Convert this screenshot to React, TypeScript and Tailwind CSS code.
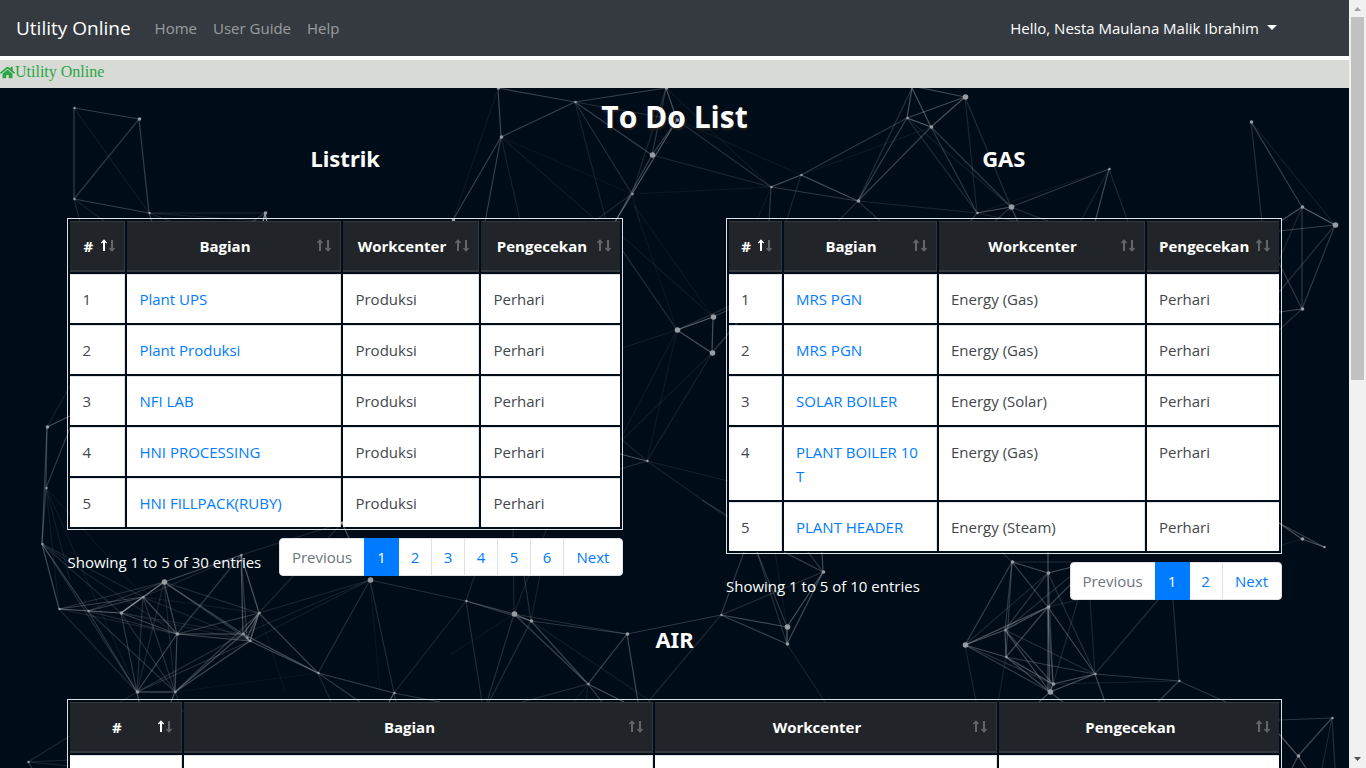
import { FaHome } from "react-icons/fa";

type Segment = [number, number, number, number, number];
type Dot = [number, number, number];

const segments: Segment[] = [
  [74, 108, 139, 119, 0.3], [74, 108, 74, 199, 0.3], [139, 119, 74, 199, 0.25], [139, 119, 149, 213, 0.3],
  [74, 108, 149, 213, 0.1], [74, 199, 149, 213, 0.3], [74, 199, 80, 222, 0.15], [74, 199, 108, 224, 0.12],
  [149, 213, 265, 213, 0.15], [149, 213, 260, 221, 0.12], [149, 213, 152, 222, 0.3], [149, 213, 172, 222, 0.15],
  [265, 213, 263, 222, 0.8], [265, 213, 267, 222, 0.8], [265, 213, 252, 222, 0.25],
  [498, 88, 575, 102, 0.3], [498, 88, 501, 137, 0.35], [575, 102, 501, 137, 0.3], [575, 102, 666, 88, 0.3],
  [575, 102, 652, 155, 0.3], [575, 102, 632, 194, 0.2], [575, 102, 606, 220, 0.12], [575, 102, 677, 120, 0.2],
  [501, 137, 453, 220, 0.3], [501, 137, 485, 222, 0.3], [501, 137, 520, 220, 0.12], [501, 137, 596, 220, 0.08],
  [501, 137, 632, 194, 0.06], [497, 92, 453, 220, 0.08], [666, 88, 677, 120, 0.4], [666, 88, 652, 155, 0.25],
  [677, 120, 652, 155, 0.3], [677, 120, 615, 222, 0.45], [666, 88, 632, 194, 0.15], [652, 155, 615, 222, 0.3],
  [652, 155, 771, 187, 0.15], [677, 120, 771, 187, 0.2], [677, 120, 801, 175, 0.08], [632, 194, 771, 187, 0.07],
  [632, 194, 596, 220, 0.15], [632, 194, 640, 222, 0.08], [666, 88, 771, 187, 0.07],
  [771, 187, 801, 175, 0.4], [771, 187, 858, 201, 0.25], [801, 175, 858, 201, 0.4], [771, 187, 769, 222, 0.25],
  [801, 175, 786, 222, 0.15], [858, 201, 838, 221, 0.15], [858, 201, 881, 222, 0.2], [801, 175, 907, 118, 0.25],
  [801, 175, 931, 127, 0.08], [771, 187, 757, 220, 0.07], [858, 201, 907, 118, 0.3], [858, 201, 931, 127, 0.3],
  [858, 201, 912, 88, 0.2], [858, 201, 977, 213, 0.15], [907, 118, 931, 127, 0.5], [907, 118, 912, 88, 0.4],
  [907, 118, 965, 97, 0.35], [912, 88, 931, 127, 0.4], [912, 86, 965, 97, 0.35], [931, 127, 965, 97, 0.4],
  [907, 118, 977, 213, 0.2], [931, 127, 977, 213, 0.25], [931, 127, 1011, 207, 0.25], [907, 118, 1011, 207, 0.1],
  [965, 97, 977, 213, 0.15], [965, 97, 1011, 207, 0.18], [977, 213, 1011, 207, 0.4], [977, 213, 970, 222, 0.3],
  [1011, 207, 1109, 169, 0.25], [977, 213, 1109, 169, 0.07], [1011, 207, 994, 222, 0.2], [1011, 207, 1018, 222, 0.35],
  [1011, 207, 1050, 222, 0.2], [977, 213, 1020, 222, 0.15], [1109, 169, 1095, 222, 0.35], [1109, 169, 1080, 222, 0.12],
  [1109, 169, 1128, 222, 0.15], [1251, 122, 1262, 222, 0.2], [1251, 122, 1302, 207, 0.3], [1251, 122, 1335, 225, 0.1],
  [1302, 207, 1335, 225, 0.5], [1302, 207, 1281, 221, 0.4], [1335, 225, 1279, 231, 0.3], [1302, 207, 1302, 309, 0.25],
  [1335, 225, 1302, 309, 0.25], [1335, 225, 1279, 292, 0.2], [1302, 207, 1279, 260, 0.15], [1279, 263, 1302, 309, 0.25],
  [1302, 309, 1279, 312, 0.35], [1302, 309, 1279, 330, 0.2],
  [622, 250, 677, 330, 0.2], [634, 205, 677, 330, 0.06], [622, 236, 713, 317, 0.08], [634, 205, 713, 317, 0.07],
  [677, 330, 713, 317, 0.5], [677, 330, 712, 353, 0.4], [713, 317, 712, 353, 0.4], [713, 317, 730, 309, 0.25],
  [677, 330, 730, 306, 0.2], [712, 353, 738, 322, 0.25], [677, 330, 622, 348, 0.1], [677, 330, 622, 436, 0.08],
  [677, 330, 647, 461, 0.08], [712, 353, 647, 461, 0.12], [712, 353, 622, 440, 0.08], [647, 461, 620, 454, 0.4],
  [647, 461, 620, 469, 0.2], [647, 461, 620, 438, 0.12], [647, 461, 728, 481, 0.12], [647, 461, 728, 518, 0.12],
  [47, 427, 70, 416, 0.4], [47, 427, 46, 488, 0.25], [47, 427, 70, 386, 0.12], [46, 488, 70, 428, 0.25],
  [46, 488, 42, 544, 0.25], [47, 427, 42, 544, 0.3], [46, 488, 59, 609, 0.08], [46, 488, 70, 580, 0.1],
  [46, 488, 137, 692, 0.08], [46, 488, 177, 634, 0.06], [42, 544, 59, 609, 0.35], [42, 544, 88, 611, 0.3],
  [42, 544, 121, 613, 0.15], [42, 544, 143, 597, 0.15], [42, 544, 137, 692, 0.2], [42, 544, 177, 634, 0.12],
  [59, 609, 121, 613, 0.5], [59, 609, 143, 597, 0.3], [59, 609, 164, 582, 0.2], [59, 609, 177, 634, 0.15],
  [59, 609, 137, 692, 0.15], [88, 611, 143, 597, 0.3], [88, 611, 164, 582, 0.2], [88, 611, 137, 692, 0.25],
  [88, 611, 177, 634, 0.2], [88, 611, 175, 692, 0.2], [121, 613, 164, 582, 0.6], [121, 613, 143, 597, 0.5],
  [121, 613, 177, 634, 0.3], [121, 613, 137, 692, 0.25], [121, 613, 175, 692, 0.2], [143, 597, 177, 634, 0.3],
  [143, 597, 137, 692, 0.2], [143, 597, 175, 692, 0.2], [143, 597, 250, 641, 0.15], [143, 597, 259, 613, 0.1],
  [164, 582, 177, 634, 0.35], [164, 582, 137, 692, 0.15], [164, 582, 175, 692, 0.15], [164, 582, 243, 634, 0.3],
  [164, 582, 250, 641, 0.25], [164, 582, 259, 613, 0.2], [164, 582, 241, 555, 0.35], [143, 597, 241, 555, 0.15],
  [177, 634, 243, 634, 0.4], [177, 634, 250, 641, 0.35], [177, 634, 259, 613, 0.25], [177, 634, 241, 555, 0.25],
  [177, 634, 137, 692, 0.35], [177, 634, 175, 692, 0.35], [121, 613, 250, 641, 0.12], [121, 613, 243, 634, 0.15],
  [241, 555, 243, 634, 0.4], [241, 555, 247, 638, 0.25], [241, 555, 259, 613, 0.4], [241, 555, 342, 523, 0.15],
  [241, 555, 285, 692, 0.06], [259, 613, 243, 634, 0.5], [259, 613, 250, 641, 0.5], [259, 613, 247, 638, 0.4],
  [243, 634, 250, 641, 0.6], [259, 613, 175, 692, 0.25], [243, 634, 175, 692, 0.35], [250, 641, 175, 692, 0.35],
  [243, 634, 137, 692, 0.2], [250, 641, 137, 692, 0.2], [259, 613, 318, 673, 0.3], [243, 634, 318, 673, 0.35],
  [250, 641, 318, 673, 0.35], [259, 613, 342, 523, 0.15], [370, 580, 259, 613, 0.15], [370, 580, 243, 634, 0.12],
  [370, 580, 250, 641, 0.1], [370, 580, 318, 673, 0.2], [370, 580, 394, 693, 0.18], [370, 580, 380, 692, 0.06],
  [137, 692, 175, 692, 0.5], [137, 692, 139, 702, 0.4], [175, 692, 171, 702, 0.4], [137, 692, 120, 702, 0.12],
  [175, 692, 318, 673, 0.06], [175, 692, 183, 712, 0.15], [318, 673, 394, 693, 0.3], [318, 673, 360, 702, 0.25],
  [318, 673, 331, 702, 0.15], [394, 693, 389, 702, 0.5], [394, 693, 440, 702, 0.25], [394, 693, 396, 702, 0.2],
  [394, 693, 466, 601, 0.15], [342, 523, 349, 538, 0.4], [370, 580, 466, 601, 0.2], [466, 601, 480, 560, 0.15],
  [466, 601, 482, 702, 0.18], [466, 601, 514, 614, 0.3], [466, 601, 531, 621, 0.25], [514, 614, 531, 621, 0.5],
  [514, 614, 627, 634, 0.2], [531, 621, 627, 634, 0.25], [514, 614, 588, 684, 0.3], [531, 621, 588, 684, 0.3],
  [514, 614, 487, 702, 0.2], [531, 621, 489, 702, 0.2], [514, 614, 513, 528, 0.15], [514, 614, 547, 528, 0.12],
  [531, 621, 524, 575, 0.2], [531, 621, 540, 575, 0.12], [531, 621, 652, 702, 0.1], [514, 614, 450, 655, 0.06],
  [627, 634, 588, 684, 0.35], [627, 634, 638, 702, 0.35], [627, 634, 721, 615, 0.25], [588, 684, 522, 702, 0.2],
  [588, 684, 624, 702, 0.4], [588, 684, 602, 702, 0.3], [588, 684, 574, 702, 0.1], [588, 684, 586, 702, 0.1],
  [721, 615, 648, 702, 0.15], [721, 615, 787, 627, 0.35], [721, 615, 787, 644, 0.3], [721, 615, 823, 572, 0.2],
  [721, 615, 744, 552, 0.25], [787, 627, 787, 644, 0.5], [787, 627, 823, 572, 0.4], [787, 644, 823, 572, 0.35],
  [787, 627, 757, 552, 0.25], [787, 644, 757, 552, 0.2], [823, 572, 784, 552, 0.3], [823, 572, 822, 552, 0.35],
  [823, 572, 808, 552, 0.25], [787, 644, 825, 702, 0.12], [787, 627, 775, 552, 0.08], [702, 500, 728, 516, 0.2],
  [1012, 562, 1048, 573, 0.35], [1012, 562, 965, 645, 0.3], [1012, 562, 1048, 607, 0.3], [1012, 562, 1006, 657, 0.25],
  [1012, 562, 1072, 562, 0.2], [1012, 562, 1005, 630, 0.25], [1012, 562, 1002, 552, 0.15], [1048, 573, 1072, 567, 0.4],
  [1048, 573, 1048, 692, 0.4], [1048, 573, 1053, 684, 0.25], [1048, 573, 1005, 630, 0.25], [1048, 573, 965, 645, 0.15],
  [1048, 573, 1095, 674, 0.2], [1048, 573, 1048, 552, 0.4], [1048, 607, 1005, 630, 0.4], [1048, 607, 965, 645, 0.4],
  [1048, 607, 1006, 657, 0.35], [1048, 607, 1072, 583, 0.3], [1048, 607, 1095, 674, 0.35], [1048, 607, 1050, 692, 0.35],
  [1048, 607, 1078, 600, 0.15], [1048, 607, 1053, 684, 0.25], [1005, 630, 965, 645, 0.4], [1005, 630, 1006, 657, 0.4],
  [1005, 630, 1095, 674, 0.2], [1005, 630, 1050, 692, 0.35], [1005, 630, 1053, 684, 0.3], [1005, 630, 1072, 575, 0.2],
  [965, 645, 1006, 657, 0.35], [965, 645, 1050, 692, 0.25], [965, 645, 1053, 684, 0.2], [965, 645, 976, 702, 0.15],
  [1006, 657, 1050, 692, 0.35], [1006, 657, 1053, 684, 0.4], [1006, 657, 1095, 674, 0.25], [1006, 657, 998, 702, 0.12],
  [1053, 684, 1095, 674, 0.4], [1050, 692, 1095, 674, 0.4], [1050, 692, 1053, 684, 0.6], [1050, 692, 1039, 702, 0.35],
  [1050, 692, 1063, 702, 0.3], [1053, 684, 1179, 681, 0.12], [1095, 674, 1179, 681, 0.25], [1095, 674, 1105, 702, 0.35],
  [1095, 674, 1158, 600, 0.18], [1095, 674, 1090, 600, 0.15], [1179, 681, 1173, 600, 0.2], [1179, 681, 1158, 702, 0.3],
  [1179, 681, 1226, 702, 0.25], [1053, 684, 1078, 600, 0.15], [1279, 523, 1302, 539, 0.4], [1279, 523, 1324, 547, 0.3],
  [1302, 539, 1324, 547, 0.4], [1302, 539, 1279, 546, 0.1], [1279, 720, 1332, 718, 0.25], [1332, 718, 1298, 756, 0.35],
  [1298, 756, 1279, 734, 0.4], [1332, 718, 1322, 768, 0.15], [1332, 718, 1335, 768, 0.2], [1298, 756, 1292, 768, 0.35],
  [1298, 756, 1306, 768, 0.35], [28, 762, 70, 736, 0.15], [28, 762, 70, 760, 0.15], [28, 762, 32, 768, 0.25],
  [28, 762, 70, 766, 0.15],
];

const dots: Dot[] = [
  [74, 108, 1], [139, 119, 2], [74, 199, 1], [149, 213, 1], [265, 213, 2], [498, 88, 2], [575, 102, 1], [501, 137, 2],
  [666, 88, 2], [677, 120, 2], [652, 155, 3], [632, 194, 1], [453, 220, 2], [771, 187, 1], [801, 175, 1], [858, 201, 2],
  [907, 118, 1], [931, 127, 2], [965, 97, 3], [977, 213, 1], [1011, 207, 3], [1109, 169, 1], [1251, 122, 2],
  [1302, 207, 2], [1335, 225, 3], [1302, 309, 2], [677, 330, 3], [713, 317, 3], [712, 353, 3], [647, 461, 1],
  [47, 427, 2], [46, 488, 1], [42, 544, 1], [59, 609, 1], [88, 611, 1], [121, 613, 2], [143, 597, 1], [164, 582, 3],
  [177, 634, 2], [241, 555, 1], [259, 613, 1], [243, 634, 1], [247, 638, 1], [250, 641, 1], [137, 692, 2], [175, 692, 1],
  [342, 523, 2], [318, 673, 1], [370, 580, 3], [394, 693, 1], [466, 601, 1], [514, 614, 3], [531, 621, 2], [588, 684, 1],
  [627, 634, 2], [721, 615, 1], [787, 627, 3], [787, 644, 2], [823, 572, 2], [1012, 562, 2], [1048, 573, 2],
  [1048, 607, 2], [1005, 630, 1], [965, 645, 3], [1006, 657, 1], [1053, 684, 2], [1050, 692, 3], [1095, 674, 1],
  [1179, 681, 1], [1302, 539, 2], [1324, 547, 1], [1332, 718, 1], [1298, 756, 2], [28, 762, 1],
];

function NetworkBackdrop() {
  return (
    <svg
      aria-hidden="true"
      className="pointer-events-none absolute top-0 left-0"
      width="1349"
      height="680"
      viewBox="0 88 1349 680"
    >
      {segments.map(([x1, y1, x2, y2, o], i) => (
        <line key={i} x1={x1} y1={y1} x2={x2} y2={y2} stroke="#b4babf" strokeOpacity={o} strokeWidth="1.2" />
      ))}
      {dots.map(([x, y, r], i) => (
        <circle key={i} cx={x + 0.5} cy={y} r={r === 1 ? 1.2 : r - 0.2} fill="#969ca1" />
      ))}
    </svg>
  );
}

function SortArrows({ sorted }: { sorted: boolean }) {
  return (
    <svg
      aria-hidden="true"
      className="absolute top-4 right-[8px]"
      width="16"
      height="14"
      viewBox="0 0 16 14"
      fill="none"
      stroke="#fff"
    >
      <g opacity={sorted ? 1 : 0.3}>
        <path d="M4 13V3" strokeWidth="2" />
        <path d="M1.4 5L4 2.2L6.6 5" strokeWidth="1.3" />
      </g>
      <g opacity="0.3">
        <path d="M12 2V12" strokeWidth="2" />
        <path d="M9.4 10L12 12.8L14.6 10" strokeWidth="1.3" />
      </g>
    </svg>
  );
}

type Row = [string, string, string];

const columns = ["#", "Bagian", "Workcenter", "Pengecekan"];

function TaskTable({ label, widths, rows }: { label: string; widths: string[]; rows: Row[] }) {
  return (
    <table
      aria-label={label}
      className="w-full table-fixed border-separate border-spacing-[2px] border border-[#dee2e6] text-[15px] leading-6"
    >
      <thead>
        <tr>
          {columns.map((name, i) => (
            <th
              key={name}
              scope="col"
              className={`relative border-t border-r border-b-2 border-[#32383e] bg-[#212529] py-3 pr-[30px] pl-3 text-center font-bold whitespace-nowrap text-white last:border-r-0 ${widths[i]}`}
            >
              <button type="button" className="font-bold">{name}</button>
              <SortArrows sorted={i === 0} />
            </th>
          ))}
        </tr>
      </thead>
      <tbody>
        {rows.map(([bagian, workcenter, check], i) => (
          <tr key={i} className="h-[49px] align-top text-[#42474c]">
            <td className="border-t border-r border-[#dee2e6] bg-white p-3">{bagian ? i + 1 : null}</td>
            <td className="border-t border-r border-[#dee2e6] bg-white p-3">
              {bagian ? <a href="#task" className="text-[#007bff]">{bagian}</a> : null}
            </td>
            <td className="border-t border-r border-[#dee2e6] bg-white p-3">{workcenter}</td>
            <td className="border-t border-[#dee2e6] bg-white p-3">{check}</td>
          </tr>
        ))}
      </tbody>
    </table>
  );
}

function Pager({ total, pages }: { total: number; pages: number }) {
  const base = "relative -ml-px h-[38px] border text-center leading-5";
  const plain = "border-[#dee2e6] bg-white text-[#007bff]";
  return (
    <div className="mt-2 flex justify-between text-[15px]">
      <p className="pt-3 leading-6 text-white">Showing 1 to 5 of {total} entries</p>
      <nav aria-label="Table pages" className="flex">
        <button type="button" disabled className={`${base} w-[86px] rounded-l border-[#dee2e6] bg-white text-[#6c757d]`}>
          Previous
        </button>
        {Array.from({ length: pages }, (_, i) => (
          <button
            key={i}
            type="button"
            className={`${base} ${i === 0 ? "z-10 w-[35px] border-[#007bff] bg-[#007bff] text-white" : `${plain} w-[34px]`}`}
          >
            {i + 1}
          </button>
        ))}
        <button type="button" className={`${base} ${plain} w-[60px] rounded-r`}>Next</button>
      </nav>
    </div>
  );
}

function SectionTitle({ children }: { children: string }) {
  return (
    <h2 className="mb-[45px] text-center font-['Noto_Sans','Open_Sans',sans-serif] text-[22px] leading-[29px] font-bold text-white">
      {children}
    </h2>
  );
}

const listrik: Row[] = [
  ["Plant UPS", "Produksi", "Perhari"],
  ["Plant Produksi", "Produksi", "Perhari"],
  ["NFI LAB", "Produksi", "Perhari"],
  ["HNI PROCESSING", "Produksi", "Perhari"],
  ["HNI FILLPACK(RUBY)", "Produksi", "Perhari"],
];

const gas: Row[] = [
  ["MRS PGN", "Energy (Gas)", "Perhari"],
  ["MRS PGN", "Energy (Gas)", "Perhari"],
  ["SOLAR BOILER", "Energy (Solar)", "Perhari"],
  ["PLANT BOILER 10 T", "Energy (Gas)", "Perhari"],
  ["PLANT HEADER", "Energy (Steam)", "Perhari"],
];

const air: Row[] = [["", "", ""]];

export default function App() {
  return (
    <div className="flex h-screen bg-white font-['Open_Sans','Noto_Sans',sans-serif]">
      <div className="flex min-w-0 flex-1 flex-col overflow-hidden">
        <header className="flex h-14 shrink-0 items-center bg-[#343a40] px-4 text-[15px]">
          <a href="#top" className="mr-6 text-[19px] text-white">Utility Online</a>
          <nav aria-label="Main" className="flex gap-4 text-white/50">
            <a href="#home">Home</a>
            <a href="#guide">User Guide</a>
            <a href="#help">Help</a>
          </nav>
          <button type="button" className="mr-14 ml-auto flex items-center gap-2 text-white">
            Hello, Nesta Maulana Malik Ibrahim
            <svg width="10" height="5" viewBox="0 0 10 5" className="mb-0.5" aria-hidden="true">
              <path d="M0 0H10L5 5Z" fill="currentColor" />
            </svg>
          </button>
        </header>

        <div className="mt-1 flex h-7 shrink-0 items-start bg-[#d8dad5] font-['Liberation_Serif',serif] text-base text-[#28a745]">
          <a href="#home" className="flex items-center">
            <FaHome className="size-[15px]" aria-hidden="true" />
            Utility Online
          </a>
        </div>

        <main className="relative flex-1 overflow-hidden bg-[#000c18]">
          <NetworkBackdrop />
          <div className="relative mx-auto w-[90%] pt-2.5">
            <h1 className="mb-2 text-center text-[30px] leading-[38px] font-bold text-white [text-shadow:1px_2px_2px_#222]">
              To Do List
            </h1>
            <div className="grid grid-cols-2 items-start gap-x-[103px]">
              <section>
                <SectionTitle>Listrik</SectionTitle>
                <TaskTable label="Listrik" rows={listrik} widths={["w-[55px]", "w-[214px]", "w-[136px]", "w-[139px]"]} />
                <Pager total={30} pages={6} />
              </section>
              <section>
                <SectionTitle>GAS</SectionTitle>
                <TaskTable label="GAS" rows={gas} widths={["w-[53px]", "w-[153px]", "w-[206px]", "w-[132px]"]} />
                <Pager total={10} pages={2} />
              </section>
            </div>
            <section className="mt-[25px]">
              <SectionTitle>AIR</SectionTitle>
              <TaskTable label="AIR" rows={air} widths={["w-[112px]", "w-[469px]", "w-[342px]", "w-[280px]"]} />
            </section>
          </div>
        </main>
      </div>

      <div aria-hidden="true" className="flex w-[17px] shrink-0 flex-col items-center justify-between bg-[#f1f1f1]">
        <div className="flex h-1/2 flex-col items-center pb-1">
          <svg width="17" height="17" viewBox="0 0 17 17" className="shrink-0">
            <path d="M5 11L8.5 7L12 11Z" fill="#a3a3a3" />
          </svg>
          <div className="w-[13px] flex-1 bg-[#c1c1c1]" />
        </div>
        <svg width="17" height="17" viewBox="0 0 17 17" className="shrink-0">
          <path d="M5 6L8.5 10L12 6Z" fill="#505050" />
        </svg>
      </div>
    </div>
  );
}
